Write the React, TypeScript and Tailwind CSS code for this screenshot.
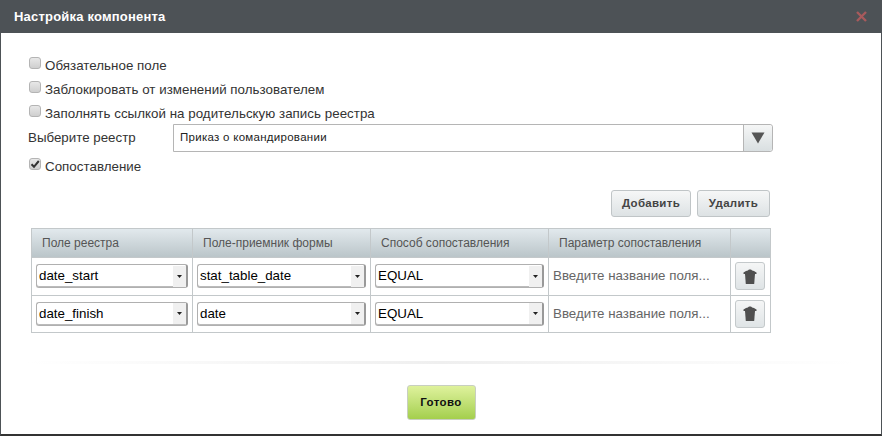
const font = "font-['Liberation_Sans',Arial,sans-serif]";

const Check = ({ label, checked }: { label: string; checked?: boolean }) => (
  <div className="flex items-center h-6">
    <span className="w-3 h-3 mt-[-4px] rounded-[3px] border border-[#b4b4b4] bg-gradient-to-b from-[#e8e8e8] to-[#cfcfcf] flex items-center justify-center shrink-0">
      {checked && (
        <svg width="10" height="10" viewBox="0 0 10 10">
          <path d="M1.5 5.2 L4 7.8 L8.8 2" fill="none" stroke="#333" strokeWidth="2" />
        </svg>
      )}
    </span>
    <span className="ml-1 mt-[1px] text-[13.33px] tracking-[0.03px] text-[#333]">{label}</span>
  </div>
);

const Select = ({ value }: { value: string }) => (
  <div className="h-6 w-full flex items-center rounded-[3px] border border-[#b0b0b0] border-r-2 border-r-[#999] bg-white pl-[2px] shadow-[inset_0_-1px_0_#bbb]">
    <span className="flex-1 text-[13.33px] text-black">{value}</span>
    <span className="w-[13px] h-[21px] bg-[#f0f0f0] flex items-center justify-center">
      <svg width="5" height="3" viewBox="0 0 5 3">
        <path d="M0 0 H5 L2.5 3 Z" fill="#222" />
      </svg>
    </span>
  </div>
);

const Trash = () => (
  <button className="w-[30px] h-[28px] rounded-[3px] border border-[#c4c9cb] bg-gradient-to-b from-[#f5f6f6] to-[#dfe4e6] flex items-center justify-center">
    <svg width="14" height="15" viewBox="0 0 14 15">
      <path d="M0.5 3.6 C1.5 2.4 3.5 1.6 5 1.4 C5.4 0.2 8.6 0.2 9 1.4 C10.5 1.6 12.5 2.4 13.5 3.6 V5 H0.5 Z" fill="#4f4f4f" />
      <path d="M2 5 H12 L11.2 15 H2.8 Z" fill="#4f4f4f" />
    </svg>
  </button>
);

const rows = [
  { a: "date_start", b: "stat_table_date", h: "h-[38px]" },
  { a: "date_finish", b: "date", h: "h-[37px]" },
];

const th = "border-r border-[#c3c8ca] pl-[10px] text-left text-[12px] font-normal text-[#555]";
const td = "border-r border-[#c3c8ca] px-1";

export default function App() {
  return (
    <div className={`${font} w-[882px] h-[436px] overflow-hidden flex flex-col bg-white border-l border-r border-[#4d5256] border-b-2 border-b-[#333]`}>
      <div className="h-[33px] shrink-0 bg-[#4d5256] flex items-center justify-between pl-[13px] pr-[14px]">
        <span className="text-[13px] font-bold text-white tracking-[0.2px]">Настройка компонента</span>
        <svg width="11" height="11" viewBox="0 0 11 11">
          <path d="M1 1 L10 10 M10 1 L1 10" stroke="#a85a5c" strokeWidth="2.4" />
        </svg>
      </div>

      <div className="flex-1 flex flex-col pt-[20px]">
        <div className="pl-[28px]">
          <Check label="Обязательное поле" />
          <Check label="Заблокировать от изменений пользователем" />
          <Check label="Заполнять ссылкой на родительскую запись реестра" />
        </div>

        <div className="flex items-center pl-[27px] h-7 mt-[-1px]">
          <span className="w-[145px] text-[13.33px] text-[#333]">Выберите реестр</span>
          <div className="w-[600px] h-7 flex border border-[#b5b5b5] rounded-r-[3px]">
            <span className="flex-1 pl-[6px] flex items-center text-[11.5px] tracking-[0.28px] text-[#222]">Приказ о командировании</span>
            <span className="w-[29px] border-l border-[#b5b5b5] bg-gradient-to-b from-[#f5f6f6] to-[#d9dfe1] rounded-r-[3px] flex items-center justify-center">
              <svg width="14" height="12" viewBox="0 0 14 12">
                <path d="M0.5 0.5 H13.5 L7 11.5 Z" fill="#555" />
              </svg>
            </span>
          </div>
        </div>

        <div className="pl-[28px] mt-[2px]">
          <Check label="Сопоставление" checked />
        </div>

        <div className="flex justify-end gap-[6px] pr-[111px] mt-[12px]">
          <button className="h-[27px] w-[80px] rounded-[3px] border border-[#c0c5c7] bg-gradient-to-b from-[#f6f7f7] to-[#dde2e4] text-[11.5px] font-bold text-[#444] tracking-[0.3px]">Добавить</button>
          <button className="h-[27px] w-[73px] rounded-[3px] border border-[#c0c5c7] bg-gradient-to-b from-[#f6f7f7] to-[#dde2e4] text-[11.5px] font-bold text-[#444] tracking-[0.3px]">Удалить</button>
        </div>

        <table className="ml-[30px] mt-[11px] w-[739px] table-fixed border-collapse border border-[#c3c8ca]">
          <colgroup>
            <col className="w-[161px]" />
            <col className="w-[178px]" />
            <col className="w-[178px]" />
            <col className="w-[182px]" />
            <col className="w-[40px]" />
          </colgroup>
          <thead>
            <tr className="h-[29px] bg-gradient-to-b from-[#e2e9ed] to-[#b9c4c8]">
              <th className={th}>Поле реестра</th>
              <th className={th}>Поле-приемник формы</th>
              <th className={th}>Способ сопоставления</th>
              <th className={th}>Параметр сопоставления</th>
              <th className={th}></th>
            </tr>
          </thead>
          <tbody>
            {rows.map((r) => (
              <tr key={r.a} className={`${r.h} border-t border-[#c3c8ca]`}>
                <td className={`${td} pb-[1px]`}><Select value={r.a} /></td>
                <td className={`${td} pb-[1px]`}><Select value={r.b} /></td>
                <td className={`${td} pb-[1px]`}><Select value="EQUAL" /></td>
                <td className={`${td} pb-[1px] text-[13.33px] text-[#666]`}>Введите название поля...</td>
                <td className={`${td} pb-[1px]`}><Trash /></td>
              </tr>
            ))}
          </tbody>
        </table>

        <div className="mt-[28px] mx-[26px] h-[3px] bg-gradient-to-r from-[#ffffff] via-[#efefef] to-[#ffffff]" />

        <div className="flex justify-center mt-[21px]">
          <button className="w-[69px] h-[35px] rounded-[3px] border border-[#c8cfc0] bg-gradient-to-b from-[#dff29c] to-[#a4cf4c] text-[11.5px] font-bold text-[#111] tracking-[0.4px]">Готово</button>
        </div>
      </div>
    </div>
  );
}
